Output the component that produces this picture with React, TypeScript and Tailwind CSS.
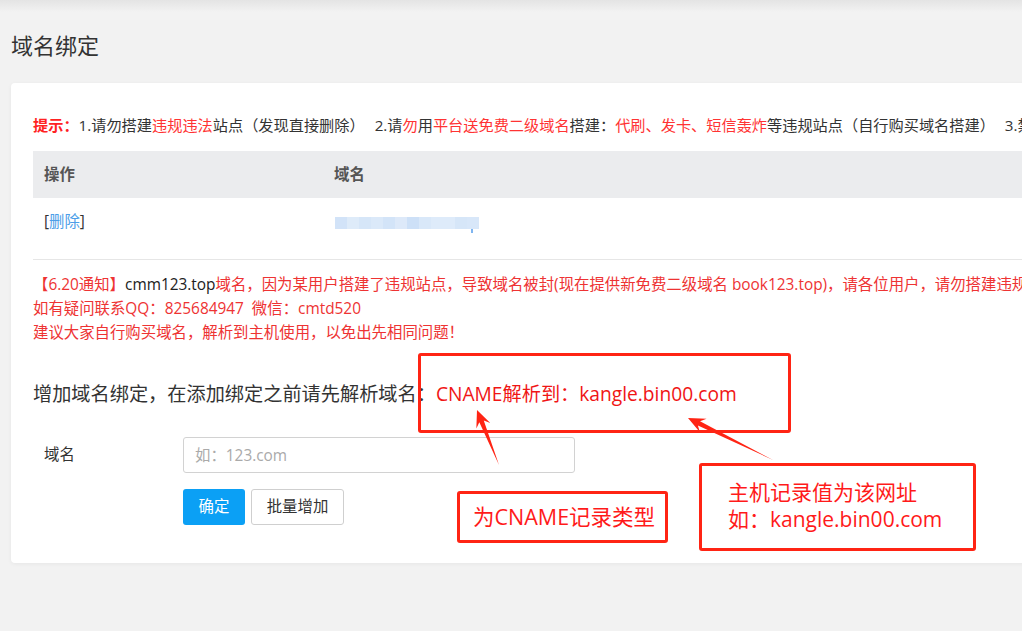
import React from "react";

const FONT = "font-['Open_Sans','Noto_Sans_CJK_SC',sans-serif]";

const blurShades = [
  "bg-[#d2e3f8]", "bg-[#deebf9]", "bg-[#d6e6f8]", "bg-[#dbe9f9]",
  "bg-[#d3e4f8]", "bg-[#dde9f9]", "bg-[#cde0f7]", "bg-[#d9e8f9]",
  "bg-[#deebfa]", "bg-[#deebfa]", "bg-[#d6e6f8]", "bg-[#d8e7f9]",
];

// tapered annotation arrow: tail -> tip
function arrowPoints(tx: number, ty: number, hx: number, hy: number, headLen = 17, headHalf = 7.5, shaftHalf = 2.4) {
  const dx = hx - tx;
  const dy = hy - ty;
  const L = Math.hypot(dx, dy);
  const ux = dx / L;
  const uy = dy / L;
  const nx = -uy;
  const ny = ux;
  const bx = hx - ux * headLen;
  const by = hy - uy * headLen;
  const cx = hx - ux * headLen * 0.72;
  const cy = hy - uy * headLen * 0.72;
  const pts = [
    [tx, ty],
    [cx + nx * shaftHalf, cy + ny * shaftHalf],
    [bx + nx * headHalf, by + ny * headHalf],
    [hx, hy],
    [bx - nx * headHalf, by - ny * headHalf],
    [cx - nx * shaftHalf, cy - ny * shaftHalf],
  ];
  return pts.map((p) => p.join(",")).join(" ");
}

export default function App() {
  return (
    <div className={`relative h-[631px] w-full overflow-hidden bg-[#f2f2f2] ${FONT}`}>
      {/* header shadow */}
      <div className="h-3 bg-gradient-to-b from-[#e4e4e4] to-[#f2f2f2]" />

      <h1 className="ml-[11px] mt-[18px] text-[22px] leading-[30px] text-[#333]">域名绑定</h1>

      {/* main card */}
      <div className="ml-[11px] mt-[23px] w-[1400px] rounded-[4px] bg-white px-[22px] pb-[38px] pt-[32px] shadow-[0_1px_4px_rgba(0,0,0,0.05)]">
        <p className="whitespace-nowrap text-[15.2px] leading-[20px] text-[#333]">
          <span className="font-bold text-[#f22]">提示：</span>
          1.请勿搭建<span className="text-[#f33]">违规违法</span>站点（发现直接删除）<span className="inline-block w-[10px]" />2.请
          <span className="text-[#f33]">勿</span>用<span className="text-[#f33]">平台送免费二级域名</span>搭建：
          <span className="text-[#f33]">代刷、发卡、短信轰炸</span>等违规站点（自行购买域名搭建）<span className="inline-block w-[10px]" />3.禁止搭建各类违规站点
        </p>

        {/* table */}
        <div className="mt-[16px] text-[15.4px]">
          <div className="flex h-[47px] items-center bg-[#ebecee] font-bold text-[#555]">
            <div className="w-[301px] pl-[11px]">操作</div>
            <div>域名</div>
          </div>
          <div className="flex h-[62px] border-b border-[#e6e6e6] pt-[13px] leading-[22px]">
            <div className="w-[302px] pl-[11px] text-[#333]">
              [<span className="text-[#4c9ee8]">删除</span>]
            </div>
            <div className="relative mt-[6px] flex h-[12px]">
              {blurShades.map((c, i) => (
                <span key={i} className={`h-[12px] w-[12px] ${c}`} />
              ))}
              <span className="absolute left-[136px] top-[12px] h-[4px] w-[2px] bg-[#7fb5f0]" />
            </div>
          </div>
        </div>

        {/* notices */}
        <div className="mt-[13px] whitespace-nowrap text-[15.4px] leading-[24px] text-[#ee3333]">
          <p>
            【6.20通知】<span className="text-[#222]">cmm123.top</span>域名，因为某用户搭建了违规站点，导致域名被封(现在提供新免费二级域名 book123.top)，请各位用户，请勿搭建违规站点，否则封号处理
          </p>
          <p>如有疑问联系QQ：825684947&nbsp;&nbsp;微信：cmtd520</p>
          <p>建议大家自行购买域名，解析到主机使用，以免出先相同问题！</p>
        </div>

        <h2 className="mt-[34px] whitespace-nowrap text-[19.2px] leading-[30px] text-[#333]">
          增加域名绑定，在添加绑定之前请先解析域名：<span className="text-[#f01515]">CNAME解析到：kangle.bin00.com</span>
        </h2>

        {/* form */}
        <div className="mt-[28px] flex items-center text-[15.4px]">
          <label className="w-[150px] pl-[11px] text-[#333]">域名</label>
          <input
            className="h-[36px] w-[392px] rounded-[3px] border border-[#d2d2d2] px-[11px] text-[#333] outline-none placeholder:text-[#aaa]"
            placeholder="如：123.com"
          />
        </div>
        <div className="ml-[150px] mt-[16px] flex gap-[6px] text-[15.4px]">
          <button className="h-[36px] w-[62px] rounded-[3px] bg-[#0ba0f5] text-white">确定</button>
          <button className="h-[36px] w-[93px] rounded-[3px] border border-[#cfcfcf] bg-white text-[#333]">批量增加</button>
        </div>
      </div>

      {/* annotations drawn over the screenshot */}
      <div className="absolute left-[418px] top-[353px] h-[80px] w-[373px] rounded-[3px] border-[3px] border-[#ff2414]" />
      <div className="absolute left-[457px] top-[491px] flex h-[52px] w-[211px] items-center rounded-[3px] border-[3px] border-[#ff2414] pl-[13px] text-[21.5px] text-[#ff1a1a]">
        为CNAME记录类型
      </div>
      <div className="absolute left-[699px] top-[463px] h-[88px] w-[277px] rounded-[3px] border-[3px] border-[#ff2414] pl-[26px] pt-[13px] text-[21px] leading-[27px] text-[#ff1a1a]">
        <p>主机记录值为该网址</p>
        <p>如：kangle.bin00.com</p>
      </div>
      <svg className="pointer-events-none absolute inset-0" width="1022" height="631">
        <polygon points={arrowPoints(499, 465, 477, 410)} fill="#ff2414" />
        <polygon points={arrowPoints(773, 460, 688, 418)} fill="#ff2414" />
      </svg>
    </div>
  );
}
